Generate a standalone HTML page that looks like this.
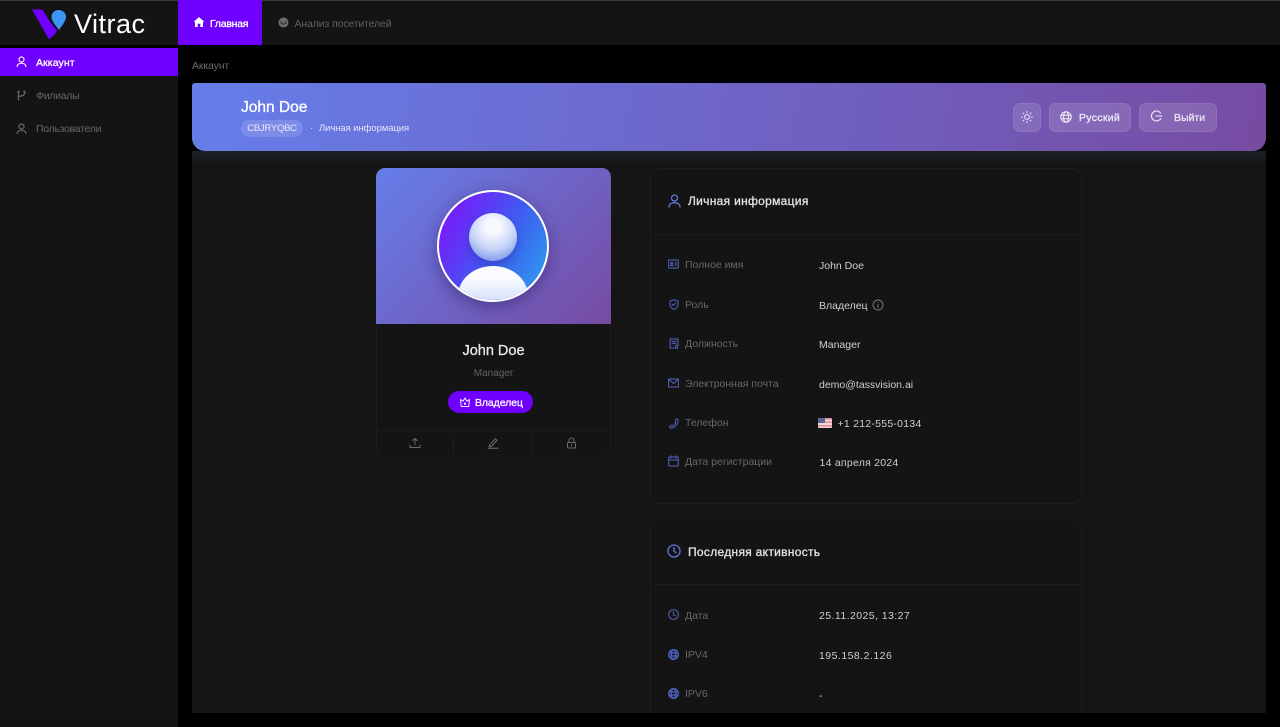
<!DOCTYPE html>
<html lang="ru"><head><meta charset="utf-8"><title>Vitrac</title>
<style>
html,body{margin:0;padding:0;width:1280px;height:727px;overflow:hidden;background:#000}
body{font-family:"Liberation Sans","Noto Sans CJK SC",sans-serif;position:relative;color:#e6e6e6}
.a{position:absolute;white-space:nowrap}
.m{-webkit-text-stroke:.3px currentColor}
svg{position:absolute;fill:none;stroke-linecap:round;stroke-linejoin:round}
.lbl{position:absolute;left:685px;font-size:10.5px;letter-spacing:0;color:#686868;line-height:12px;white-space:nowrap}
.val{position:absolute;left:819px;font-size:10.5px;letter-spacing:0;color:#cfcfcf;line-height:13px;white-space:nowrap}
.ic{stroke:#4a58a4;stroke-width:1.2}
.nav{position:absolute;left:36px;font-size:10.5px;letter-spacing:-.28px;line-height:12px;color:#686868}
.card{position:absolute;background:#141414;border:1px solid #1c1c1c;box-sizing:border-box}
.btn{position:absolute;top:103px;height:29px;box-sizing:border-box;background:rgba(255,255,255,.13);border:1px solid rgba(255,255,255,.08);border-radius:7px}
</style></head><body>
<!-- top bar -->
<div class="a" style="left:0;top:0;width:1280px;height:45px;background:#141414;border-top:1px solid #3a3a3a;box-sizing:border-box"></div>
<div class="a" style="left:178px;top:0;width:84px;height:45px;background:#6f00ff"></div>
<svg style="left:32px;top:8px" width="38" height="32" viewBox="0 0 38 32"><path d="M0 1.500H10.500L17.500 13L25 22.500L23 26L17 31.500Z" fill="#6f00ff"/><path d="M26.500 1.500C31 1.500 34.500 4.800 34.500 9C34.500 14 29.500 18.500 27 23C24.300 18.500 19 14 19 9C19 4.800 22.300 1.500 26.500 1.500Z" fill="#3d96f5" stroke="#141414" stroke-width="1"/></svg>
<div class="a" style="left:74px;top:8px;font-size:27px;line-height:32px;color:#fff;letter-spacing:.5px">Vitrac</div>
<svg style="left:193px;top:16px" width="12" height="12" viewBox="0 0 12 12"><path d="M6 1L11.500 6H10V11H7.300V7.800H4.700V11H2V6H.5Z" fill="#fff"/></svg>
<div class="a m" style="left:210px;top:18px;font-size:10.5px;line-height:12px;color:#fff;letter-spacing:-.25px">Главная</div>
<svg style="left:278px;top:17px" width="11" height="11" viewBox="0 0 11 11"><circle cx="5.500" cy="5.500" r="5" fill="#6c6c6c"/><path d="M3 4.800C3.600 7.800 7.400 7.800 8 4.800" stroke="#2a2a2a" stroke-width="1.100"/></svg>
<div class="a" style="left:294.500px;top:18px;font-size:10.5px;line-height:12px;color:#626262;letter-spacing:-.13px">Анализ посетителей</div>
<!-- sidebar -->
<div class="a" style="left:0;top:45px;width:178px;height:682px;background:#141414"></div>
<div class="a" style="left:0;top:45px;width:178px;height:3px;background:#000"></div>
<div class="a" style="left:0;top:48px;width:178px;height:28px;background:#6f00ff"></div>
<svg style="left:16px;top:56px" width="11" height="12" viewBox="0 0 11 12" stroke="#f3e6ff" stroke-width="1.200"><circle cx="5.500" cy="3.500" r="2.500"/><path d="M1.200 10.500C1.200 8.500 3 7.300 5.500 7.300S9.800 8.500 9.800 10.500"/></svg>
<div class="nav m" style="top:57px;color:#fff;letter-spacing:.1px">Аккаунт</div>
<svg style="left:16px;top:90px" width="11" height="12" viewBox="0 0 11 12" stroke="#666" stroke-width="1.200"><path d="M2.500 2V10M8.500 2V3.500C8.500 5.500 6 6 2.500 6.500"/><circle cx="2.500" cy="1.800" r=".6"/><circle cx="8.500" cy="1.800" r=".6"/></svg>
<div class="nav" style="top:90px">Филиалы</div>
<svg style="left:16px;top:123px" width="11" height="12" viewBox="0 0 11 12" stroke="#666" stroke-width="1.200"><circle cx="5.500" cy="3.500" r="2.500"/><path d="M1.200 10.500C1.200 8.500 3 7.300 5.500 7.300S9.800 8.500 9.800 10.500"/></svg>
<div class="nav" style="top:123px">Пользователи</div>
<!-- main -->
<div class="a" style="left:192px;top:60px;font-size:10.5px;line-height:12px;letter-spacing:-.13px;color:#6c6c6c">Аккаунт</div>
<div class="a" style="left:192px;top:151px;width:1074px;height:562px;background:#151515"></div>
<div class="a" style="left:192px;top:151px;width:1074px;height:14px;background:linear-gradient(#1c2024,#151515)"></div>
<div class="a" style="left:192px;top:83px;width:1074px;height:68px;border-radius:3px 3px 13px 13px;background:linear-gradient(100deg,#667eea,#764ba2)"></div>
<div class="a m" style="left:241px;top:99px;font-size:15.500px;line-height:18px;color:#fff">John Doe</div>
<div class="a" style="left:241px;top:120px;width:62px;height:17px;border-radius:9px;background:rgba(255,255,255,.14);font-size:9.500px;line-height:17px;text-align:center;color:#e8e8fa;letter-spacing:-.25px">CBJRYQBC</div>
<div class="a" style="left:310px;top:122px;font-size:10px;line-height:13px;color:#d8d8f0">·</div>
<div class="a" style="left:319px;top:123px;font-size:9.500px;line-height:12px;color:#e6e4f6;letter-spacing:-.08px">Личная информация</div>
<!-- banner buttons -->
<div class="btn" style="left:1013px;width:28px"></div>
<svg style="left:1021px;top:111px" width="12" height="12" viewBox="0 0 12 12" stroke="#f0ebfa" stroke-width="1"><circle cx="6" cy="6" r="2.400"/><path d="M6 .5V1.500M6 10.500V11.500M.5 6H1.500M10.500 6H11.500M2.100 2.100L2.800 2.800M9.200 9.200L9.900 9.900M2.100 9.900L2.800 9.200M9.200 2.800L9.900 2.100"/></svg>
<div class="btn" style="left:1049px;width:82px"></div>
<svg style="left:1060px;top:111px" width="12" height="12" viewBox="0 0 12 12" stroke="#f3effb" stroke-width="1"><circle cx="6" cy="6" r="5.200"/><ellipse cx="6" cy="6" rx="2.400" ry="5.200"/><path d="M1 4.200H11M1 7.800H11"/></svg>
<div class="a m" style="left:1079px;top:112px;font-size:10.500px;line-height:12px;color:#f0ebfa;letter-spacing:.3px">Русский</div>
<div class="btn" style="left:1139px;width:78px"></div>
<svg style="left:1150px;top:110px" width="13" height="13" viewBox="0 0 13 13" stroke="#f0ebfa" stroke-width="1.100"><path d="M10.500 3A5 5 0 1 0 10.800 8.500M6 6H12"/></svg>
<div class="a m" style="left:1174px;top:112px;font-size:10.500px;line-height:12px;color:#e8e2f6">Выйти</div>
<!-- profile card -->
<div class="card" style="left:376px;top:168px;width:235px;height:290px;border-radius:10px"></div>
<div class="a" style="left:376px;top:168px;width:235px;height:156px;border-radius:9px 9px 0 0;background:linear-gradient(135deg,#667eea,#764ba2)"></div>
<div class="a" style="left:437px;top:190px;width:112px;height:112px;border-radius:50%;box-sizing:border-box;border:2.700px solid #fff;background:linear-gradient(120deg,#7a18fb 10%,#3f5cf0 55%,#2f95ee 90%);box-shadow:0 5px 16px rgba(40,20,90,.45);overflow:hidden">
<div style="position:absolute;left:30px;top:21px;width:48px;height:48px;border-radius:50%;background:radial-gradient(circle at 50% 28%,#f7f8ff 18%,#c3d2f7 55%,#5d79e8 100%);box-shadow:0 5px 9px rgba(30,40,150,.35)"></div>
<div style="position:absolute;left:19px;top:74px;width:70px;height:60px;border-radius:50%;background:linear-gradient(#fafbff 20%,#dfe7fb 50%,#a9bdf3 85%)"></div>
</div>
<div class="a m" style="left:376px;top:342px;width:235px;text-align:center;font-size:14.500px;line-height:18px;color:#e8e8e8">John Doe</div>
<div class="a" style="left:376px;top:368px;width:235px;text-align:center;font-size:10px;line-height:12px;color:#626262">Manager</div>
<div class="a" style="left:448px;top:391px;width:85px;height:22px;border-radius:11px;background:#6f00ff"></div>
<svg style="left:459px;top:396px" width="12" height="12" viewBox="0 0 12 12" stroke="#f5ecff" stroke-width="1"><path d="M1.500 3.500L4 5.200L6 2L8 5.200L10.500 3.500L9.800 10.500H2.200Z"/><circle cx="6" cy="7.700" r=".7"/></svg>
<div class="a m" style="left:475px;top:396.500px;font-size:10.500px;line-height:12px;color:#fbf6ff;letter-spacing:-.1px">Владелец</div>
<div class="a" style="left:377px;top:430px;width:233px;height:1px;background:#1c1c1c"></div>
<div class="a" style="left:453px;top:436px;width:1px;height:17px;background:#1f1f1f"></div>
<div class="a" style="left:532px;top:436px;width:1px;height:17px;background:#1f1f1f"></div>
<svg style="left:409px;top:437px" width="12" height="12" viewBox="0 0 12 12" stroke="#6a6a6a" stroke-width="1"><path d="M6 7.500V1.500M3.800 3.500L6 1.300L8.200 3.500M1 8V10.500H11V8"/></svg>
<svg style="left:487px;top:437px" width="12" height="12" viewBox="0 0 12 12" stroke="#6e6e6e" stroke-width="1"><path d="M2.500 8.200L8.300 1.800L10 3.300L4.300 9.500L2.200 9.800ZM1 11.300H11"/></svg>
<svg style="left:566px;top:437px" width="11" height="12" viewBox="0 0 11 12" stroke="#6a6a6a" stroke-width="1"><rect x="1.500" y="5.500" width="8" height="5.500" rx=".8"/><path d="M3 5.500V3.500A2.500 2.500 0 0 1 8 3.500V5.500M5.500 7.500V9"/></svg>
<!-- personal info card -->
<div class="card" style="left:650px;top:168px;width:432px;height:336px;border-radius:10px"></div>
<div class="a" style="left:651px;top:234px;width:430px;height:1px;background:#1c1c1c"></div>
<svg class="ic" style="left:668px;top:194px;stroke:#6377dc;stroke-width:1.300" width="13" height="14" viewBox="0 0 13 14"><circle cx="6.500" cy="4" r="3"/><path d="M1 13C1 10 3.500 8.700 6.500 8.700S12 10 12 13"/></svg>
<div class="a m" style="left:688px;top:194px;font-size:12px;line-height:14px;color:#e4e4e4;letter-spacing:.3px">Личная информация</div>

<svg class="ic" style="left:668px;top:259px" width="11" height="10" viewBox="0 0 11 10"><rect x=".5" y="1" width="10" height="8" rx=".6"/><path d="M2.300 6.500H5M7 4H9M7 6H9M2.800 3.500H4.500V5H2.800Z"/></svg>
<div class="lbl" style="top:259px">Полное имя</div><div class="val" style="top:260px">John Doe</div>
<svg class="ic" style="left:669px;top:299px" width="10" height="11" viewBox="0 0 10 11"><path d="M5 .8L9 2V5.500C9 8 7.200 9.500 5 10.300C2.800 9.500 1 8 1 5.500V2ZM3.200 5.300L4.500 6.500L6.800 4"/></svg>
<div class="lbl" style="top:299px">Роль</div><div class="val" style="top:300px">Владелец</div>
<svg style="left:872px;top:299px" width="12" height="12" viewBox="0 0 12 12" stroke="#777" stroke-width="1"><circle cx="6" cy="6" r="5"/><path d="M6 5.500V8.500M6 3.500V3.600"/></svg>
<svg class="ic" style="left:669px;top:338px" width="10" height="11" viewBox="0 0 10 11"><path d="M9 8V1H1V10H5M3 3.500H7M3 5.500H7M6.500 7.500H8.500V10.300H6.500Z"/></svg>
<div class="lbl" style="top:338px">Должность</div><div class="val" style="top:339px">Manager</div>
<svg class="ic" style="left:668px;top:378px" width="11" height="10" viewBox="0 0 11 10"><rect x=".5" y="1" width="10" height="8" rx=".6"/><path d="M.8 1.500L5.500 5.500L10.200 1.500"/></svg>
<div class="lbl" style="top:378px">Электронная почта</div><div class="val" style="top:379px">demo@tassvision.ai</div>
<svg class="ic" style="left:669px;top:418px" width="10" height="11" viewBox="0 0 10 11"><path d="M9 1.500C9.500 6 6 10 1.500 10C.5 10 .5 8.500 1.200 8C2 7.400 3 7.200 3.500 7.800C5 7.500 6.500 5.800 6.600 4.200C6 3.500 6.200 2.500 6.800 1.500C7.300 .8 8.700 .8 9 1.500Z"/></svg>
<div class="lbl" style="top:417px">Телефон</div>
<div class="a" style="left:818px;top:418px;width:14px;height:10px;border-radius:1px;overflow:hidden;background:repeating-linear-gradient(#e08f98 0,#e08f98 1.700px,#ecd6da 1.700px,#ecd6da 3.400px)"><div style="width:7px;height:5px;background:#5a6496"></div></div>
<div class="val" style="left:837.500px;top:418px;letter-spacing:.25px">+1 212-555-0134</div>
<svg class="ic" style="left:668px;top:455px" width="11" height="12" viewBox="0 0 11 12"><rect x=".7" y="2" width="9.600" height="9" rx=".8"/><path d="M.7 5H10.300M3 .8V3M8 .8V3"/></svg>
<div class="lbl" style="top:456px">Дата регистрации</div><div class="val" style="left:819.500px;top:457px;letter-spacing:.25px">14 апреля 2024</div>
<!-- activity card -->
<div class="card" style="left:650px;top:518px;width:432px;height:195px;border-bottom:0;border-radius:10px 10px 0 0"></div>
<div class="a" style="left:651px;top:584px;width:430px;height:1px;background:#1c1c1c"></div>
<svg style="left:667px;top:544px" width="14" height="14" viewBox="0 0 14 14" stroke="#6377dc" stroke-width="1.300"><circle cx="7" cy="7" r="6"/><path d="M7 3.500V7.300L9.300 8.700"/></svg>
<div class="a m" style="left:688px;top:545px;font-size:12px;line-height:14px;color:#e4e4e4;letter-spacing:.3px">Последняя активность</div>
<svg class="ic" style="left:668px;top:609px" width="11" height="11" viewBox="0 0 11 11"><circle cx="5.500" cy="5.500" r="4.800"/><path d="M5.500 2.800V5.700L7.300 6.800"/></svg>
<div class="lbl" style="top:610px">Дата</div><div class="val" style="top:610px;letter-spacing:.43px">25.11.2025, 13:27</div>
<svg class="ic" style="left:668px;top:649px;stroke:#5266c8" width="11" height="11" viewBox="0 0 11 11"><circle cx="5.500" cy="5.500" r="4.800"/><ellipse cx="5.500" cy="5.500" rx="2.200" ry="4.800"/><path d="M1 4H10M1 7H10"/></svg>
<div class="lbl" style="top:649px">IPV4</div><div class="val" style="top:650px;letter-spacing:.47px">195.158.2.126</div>
<svg class="ic" style="left:668px;top:688px;stroke:#5266c8" width="11" height="11" viewBox="0 0 11 11"><circle cx="5.500" cy="5.500" r="4.800"/><ellipse cx="5.500" cy="5.500" rx="2.200" ry="4.800"/><path d="M1 4H10M1 7H10"/></svg>
<div class="lbl" style="top:688px">IPV6</div><div class="val" style="top:690px">-</div>
</body></html>
